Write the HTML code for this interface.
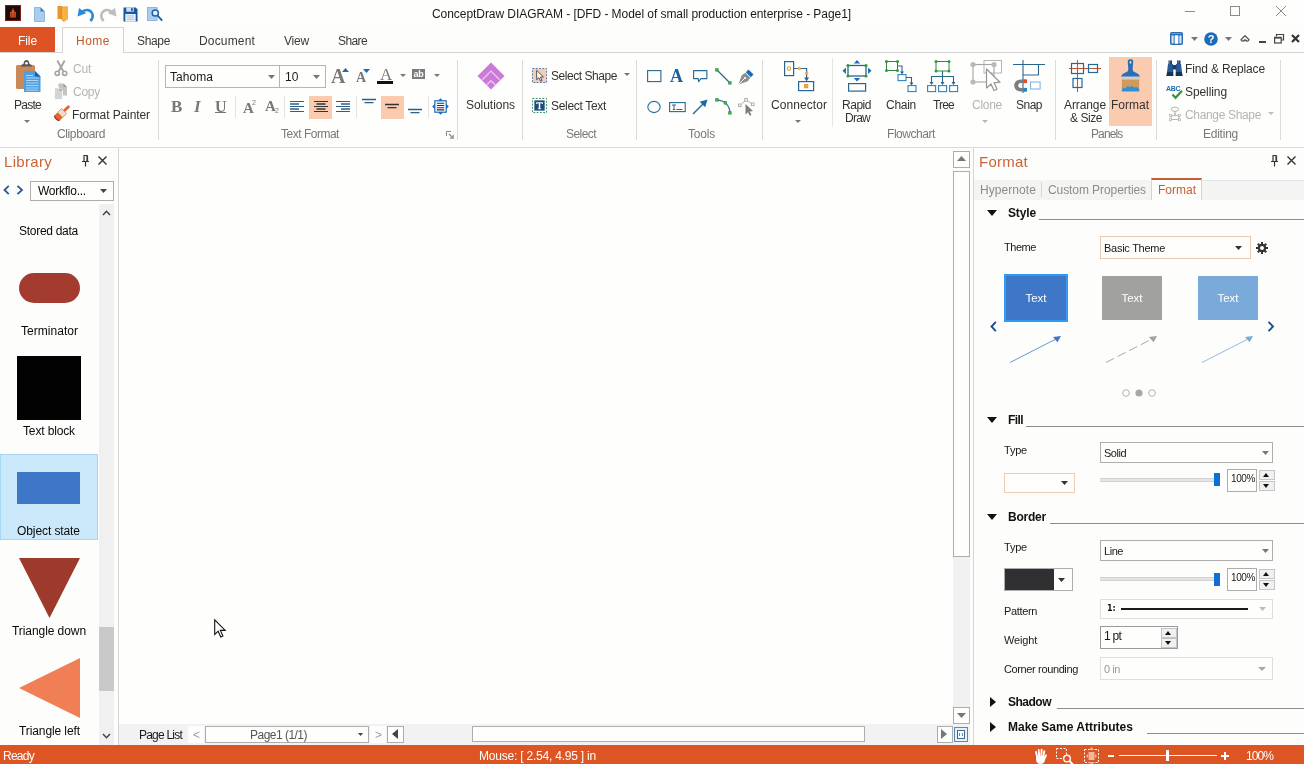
<!DOCTYPE html>
<html>
<head>
<meta charset="utf-8">
<title>ConceptDraw DIAGRAM</title>
<style>
html,body{margin:0;padding:0;}
body{width:1304px;height:764px;overflow:hidden;background:#fdfdfb;font-family:"Liberation Sans",sans-serif;font-size:12px;color:#222;position:relative;}
.a{position:absolute;white-space:nowrap;line-height:1;}
.t{position:absolute;white-space:nowrap;line-height:14px;height:14px;}
.g{color:#787878;}
.d{color:#b4b4b4;}
.f{font-size:11px;color:#1a1a1a;}
.sep{position:absolute;width:1px;background:#dcdcdc;}
svg{position:absolute;overflow:visible;}
</style>
</head>
<body>
<div id="root" style="position:absolute;left:0;top:0;width:1304px;height:764px;will-change:transform;">

<!-- ===== TITLE BAR ===== -->
<div class="a" id="titlebar" style="left:0;top:0;width:1304px;height:27px;background:#fefefc;"></div>
<div class="t" style="left:432px;top:7px;font-size:12px;color:#1a1a1a;letter-spacing:-0.06px;">ConceptDraw DIAGRAM - [DFD - Model of small production enterprise - Page1]</div>


<!-- quick access toolbar icons -->
<svg style="left:5px;top:5px" width="16" height="16" viewBox="0 0 16 16">
  <rect x="0.5" y="0.5" width="15" height="15" fill="#1b0b0a" stroke="#7a1c14"/>
  <path d="M5.200 12.500V6.800h1.600V5h0.700V3.200h1V5h0.700v1.800h1.600v5.700z" fill="#e2571f"/>
  <path d="M6.900 7.500v5M9.100 7.500v5" stroke="#5a1a10" stroke-width="0.600"/>
</svg>
<svg style="left:34px;top:7px" width="11" height="15" viewBox="0 0 11 15">
  <path d="M0.5 0.5h6l4 4v10h-10z" fill="#a9cdef" stroke="#8fb6dc"/>
  <path d="M6.5 0.5v4h4z" fill="#3f7fc0"/>
</svg>
<svg style="left:57px;top:5px" width="12" height="17" viewBox="0 0 12 17">
  <path d="M0.5 1.5h10.5v12.5h-10.5z" fill="#e8952a"/>
  <path d="M4.5 2.5l6.5-1v13l-4 2.3l-2.5-2.8z" fill="#f7b043"/>
  <path d="M0.5 1.5h4v12.5l2.5 2.8" fill="none" stroke="#d8881f" stroke-width="0.8"/>
</svg>
<svg style="left:77px;top:6px" width="18" height="16" viewBox="0 0 18 16">
  <path d="M4.5 6.5C8 2.8 13 3.2 15 7c1.3 2.6 0.6 5.6-1.6 8" fill="none" stroke="#2b8bd6" stroke-width="2.6"/>
  <path d="M0.5 10.5l1.5-8.5l7.2 5.2z" fill="#2b8bd6"/>
</svg>
<svg style="left:99px;top:6px" width="18" height="16" viewBox="0 0 18 16">
  <path d="M13.5 6.5C10 2.8 5 3.2 3 7c-1.3 2.6-0.6 5.6 1.6 8" fill="none" stroke="#bdbdbd" stroke-width="2.6"/>
  <path d="M17.5 10.5l-1.5-8.5l-7.2 5.2z" fill="#bdbdbd"/>
</svg>
<svg style="left:123px;top:7px" width="15" height="15" viewBox="0 0 16 16">
  <path d="M0.5 0.5h13l2 2v13h-15z" fill="#1859a8"/>
  <rect x="3.5" y="0.5" width="8" height="4.5" fill="#cfe2f5"/>
  <rect x="8.6" y="1.2" width="1.8" height="3" fill="#1859a8"/>
  <rect x="2.5" y="7.5" width="11" height="8" fill="#f4f8fc"/>
  <path d="M4 9.5h8M4 11.5h8M4 13.5h8" stroke="#9db9d8" stroke-width="0.9"/>
</svg>
<svg style="left:147px;top:6px" width="17" height="17" viewBox="0 0 17 17">
  <rect x="0.5" y="1.5" width="9.5" height="13" fill="#a9cdef" stroke="#8fb6dc"/>
  <circle cx="8.3" cy="7" r="3.1" fill="#e6f1fb" stroke="#1f5fa8" stroke-width="1.5"/>
  <path d="M10.6 9.6l4.6 5" stroke="#1f5fa8" stroke-width="1.9"/>
</svg>

<!-- window controls -->
<div class="a" style="left:1185px;top:11px;width:10px;height:1px;background:#8a8a8a;"></div>
<div class="a" style="left:1230px;top:6px;width:8px;height:8px;border:1px solid #8a8a8a;"></div>
<svg style="left:1276px;top:6px" width="10" height="10" viewBox="0 0 10 10"><path d="M0 0l10 10M10 0l-10 10" stroke="#8a8a8a" stroke-width="1"/></svg>

<!-- tab-row right icons -->
<svg style="left:1170px;top:32px" width="13" height="13" viewBox="0 0 13 13">
  <rect x="0.75" y="0.75" width="11.5" height="11.5" rx="1" fill="#d9e8f7" stroke="#2b6cb4" stroke-width="1.5"/>
  <path d="M0.75 2.6h11.5" stroke="#2b6cb4" stroke-width="1.6"/>
  <path d="M4.2 2.6v9.4M8.8 2.6v9.4" stroke="#2b6cb4" stroke-width="1.1"/>
  <rect x="4.8" y="3.6" width="3.4" height="8" fill="#fff"/>
</svg>
<svg style="left:1191px;top:37px" width="7" height="4" viewBox="0 0 7 4"><path d="M0 0h7l-3.5 4z" fill="#777"/></svg>
<svg style="left:1204px;top:32px" width="14" height="14" viewBox="0 0 14 14">
  <circle cx="7" cy="7" r="6.8" fill="#1b6cb8"/>
  <text x="7" y="11" font-family="Liberation Sans, sans-serif" font-size="11" font-weight="bold" fill="#fff" text-anchor="middle">?</text>
</svg>
<svg style="left:1225px;top:37px" width="7" height="4" viewBox="0 0 7 4"><path d="M0 0h7l-3.5 4z" fill="#777"/></svg>
<svg style="left:1240px;top:34px" width="10" height="9" viewBox="0 0 10 9"><path d="M1 5.8L5 1.6L9 5.8C8.2 7.8 6.4 7.4 5 5.8C3.6 7.4 1.8 7.8 1 5.800z" fill="none" stroke="#555" stroke-width="1.3" stroke-linejoin="round"/></svg>
<div class="a" style="left:1259px;top:41px;width:7px;height:2px;background:#444;"></div>
<svg style="left:1274px;top:34px" width="10" height="10" viewBox="0 0 10 10">
  <path d="M2.5 2.5v-2h7v5.500h-2" fill="none" stroke="#444" stroke-width="1.2"/>
  <rect x="0.6" y="3.4" width="6.6" height="5.6" fill="none" stroke="#444" stroke-width="1.2"/>
  <path d="M0.6 3.800h6.600" stroke="#444" stroke-width="1.600"/>
</svg>
<svg style="left:1291px;top:34px" width="9" height="9" viewBox="0 0 9 9"><path d="M1 1l7 7M8 1l-7 7" stroke="#333" stroke-width="2.2"/></svg>

<!-- ===== TAB ROW ===== -->
<div class="a" style="left:0;top:27px;width:55px;height:25px;background:#de5324;"></div>
<div class="t" style="left:18px;top:34px;color:#fff;letter-spacing:-0.09px;">File</div>
<div class="a" style="left:62px;top:27px;width:60px;height:25px;border:1px solid #d4d4d4;border-bottom:none;background:#fefefc;"></div>
<div class="t" style="left:76px;top:34px;color:#c5562c;letter-spacing:0.50px;">Home</div>
<div class="t" style="left:137px;top:34px;color:#3a3a3a;letter-spacing:-0.34px;">Shape</div>
<div class="t" style="left:199px;top:34px;color:#3a3a3a;letter-spacing:0.16px;">Document</div>
<div class="t" style="left:284px;top:34px;color:#3a3a3a;letter-spacing:-0.20px;">View</div>
<div class="t" style="left:338px;top:34px;color:#3a3a3a;letter-spacing:-0.61px;">Share</div>
<div class="a" style="left:0;top:52px;width:62px;height:1px;background:#d4d4d4;"></div>
<div class="a" style="left:123px;top:52px;width:1181px;height:1px;background:#d4d4d4;"></div>

<!-- ===== RIBBON ===== -->
<div class="a" id="ribbon" style="left:0;top:53px;width:1304px;height:94px;background:#fefefc;"></div>
<div class="a" style="left:0;top:147px;width:1304px;height:1px;background:#d9d9d9;"></div>


<!-- Clipboard group -->
<svg style="left:15px;top:59px" width="27" height="34" viewBox="0 0 27 34">
  <rect x="1" y="6" width="19" height="24" rx="1.5" fill="#c98a55"/>
  <path d="M6 7.5c0-1.500 1-2.500 2.500-2.500c0-2.700 1.300-4 3-4s3 1.300 3 4c1.500 0 2.500 1 2.500 2.500z" fill="#5b5560"/>
  <circle cx="11.500" cy="4.300" r="1.300" fill="#fefefc"/>
  <path d="M9 12h11l5.500 5.500V33H9z" fill="#4d9fe2"/>
  <path d="M20 12v5.500h5.500z" fill="#1c5fa5"/>
  <path d="M11 16.500h7M11 19h12.500M11 21.500h12.500M11 24h12.500M11 26.500h12.500M11 29h12.500M11 31.200h12.500" stroke="#b9dcf6" stroke-width="0.900"/>
</svg>
<div class="t" style="left:14px;top:98px;color:#333;letter-spacing:-0.74px;">Paste</div>
<svg style="left:24px;top:120px" width="6" height="3" viewBox="0 0 6 3"><path d="M0 0h6l-3 3z" fill="#777"/></svg>

<svg style="left:54px;top:60px" width="14" height="17" viewBox="0 0 14 17">
  <path d="M3.300 0.500L9.300 11.200M10.700 0.500L4.700 11.200" stroke="#a4a4a4" stroke-width="1.900" fill="none"/>
  <circle cx="3.300" cy="13.300" r="2.100" fill="none" stroke="#a4a4a4" stroke-width="1.600"/>
  <circle cx="10.700" cy="13.300" r="2.100" fill="none" stroke="#a4a4a4" stroke-width="1.600"/>
</svg>
<div class="t d" style="left:73px;top:62px;letter-spacing:-0.23px;">Cut</div>
<svg style="left:54px;top:83px" width="14" height="17" viewBox="0 0 14 17">
  <path d="M4.500 0.500h5l3.500 3.500v8.500h-8.500z" fill="#c4c4c4"/>
  <path d="M9.500 0.500v3.500h3.500z" fill="#9d9d9d"/>
  <path d="M0.500 5h5l3 3v8.500h-8z" fill="#d4d4d4" stroke="#fefefc" stroke-width="0.800"/>
  <path d="M5.500 5v3h3z" fill="#a8a8a8"/>
</svg>
<div class="t d" style="left:73px;top:85px;letter-spacing:-0.25px;">Copy</div>
<svg style="left:53px;top:105px" width="17" height="17" viewBox="0 0 17 17">
  <g transform="rotate(45 8.500 8.500)">
    <rect x="7.200" y="-2.500" width="2.800" height="8" rx="1.200" fill="#e8602a"/>
    <rect x="5" y="5" width="7.200" height="5.500" fill="#f5d9c0" stroke="#c58a60" stroke-width="0.700"/>
    <path d="M5 10.500h7.200v4.500c-2.400 1.200-4.800 1.200-7.200 0z" fill="#e8602a"/>
    <path d="M5 14.500c2.400 1.400 4.800 1.400 7.200 0v1.300c-2.400 1.300-4.800 1.300-7.200 0z" fill="#8a3a1a"/>
  </g>
</svg>
<div class="t" style="left:72px;top:108px;color:#333;letter-spacing:-0.10px;">Format Painter</div>
<div class="t g" style="left:57px;top:127px;letter-spacing:-0.38px;">Clipboard</div>
<div class="sep" style="left:158px;top:60px;height:80px;"></div>

<!-- Text Format group -->
<div class="a" style="left:165px;top:65px;width:113px;height:21px;border:1px solid #b5b5b5;background:#fefefd;"></div>
<div class="a" style="left:279px;top:65px;width:45px;height:21px;border:1px solid #b5b5b5;border-left:1px solid #b5b5b5;background:#fefefd;"></div>
<div class="t" style="left:170px;top:70px;color:#1a1a1a;letter-spacing:0.05px;">Tahoma</div>
<svg style="left:268px;top:75px" width="7" height="4" viewBox="0 0 7 4"><path d="M0 0h7l-3.500 4z" fill="#777"/></svg>
<div class="t" style="left:285px;top:70px;color:#1a1a1a;">10</div>
<svg style="left:313px;top:75px" width="7" height="4" viewBox="0 0 7 4"><path d="M0 0h7l-3.500 4z" fill="#777"/></svg>

<div class="a" style="left:331px;top:66px;font-family:'Liberation Serif',serif;font-weight:bold;font-size:20px;color:#787878;line-height:20px;">A</div>
<svg style="left:342px;top:68px" width="7" height="4" viewBox="0 0 7 4"><path d="M0 4h7l-3.500-4z" fill="#1b6cb8"/></svg>
<div class="a" style="left:356px;top:71px;font-family:'Liberation Serif',serif;font-weight:bold;font-size:14px;color:#787878;line-height:14px;">A</div>
<svg style="left:363px;top:69px" width="7" height="4" viewBox="0 0 7 4"><path d="M0 0h7l-3.500 4z" fill="#1b6cb8"/></svg>
<div class="a" style="left:380px;top:66px;font-family:'Liberation Serif',serif;font-size:17px;color:#787878;line-height:17px;">A</div>
<div class="a" style="left:377px;top:81px;width:16px;height:3px;background:#111;"></div>
<svg style="left:400px;top:74px" width="6" height="3" viewBox="0 0 6 3"><path d="M0 0h6l-3 3z" fill="#777"/></svg>
<div class="a" style="left:412px;top:69px;width:13px;height:10px;background:#7b7b7b;color:#fff;font-size:9px;line-height:10px;font-weight:bold;text-align:center;letter-spacing:-0.3px;">ab</div>
<svg style="left:434px;top:74px" width="6" height="3" viewBox="0 0 6 3"><path d="M0 0h6l-3 3z" fill="#777"/></svg>

<div class="a" style="left:171px;top:98px;font-family:'Liberation Serif',serif;font-weight:bold;font-size:17px;color:#787878;line-height:17px;">B</div>
<div class="a" style="left:194px;top:98px;font-family:'Liberation Serif',serif;font-style:italic;font-weight:bold;font-size:17px;color:#787878;line-height:17px;">I</div>
<div class="a" style="left:215px;top:98px;font-family:'Liberation Serif',serif;font-size:16px;font-weight:bold;color:#787878;line-height:17px;">U</div>
<div class="a" style="left:215px;top:112px;width:11px;height:1px;background:#787878;"></div>
<div class="sep" style="left:235px;top:96px;height:22px;background:#e4e4e4;"></div>
<div class="a" style="left:243px;top:101px;font-family:'Liberation Serif',serif;font-weight:bold;font-size:15px;color:#787878;line-height:15px;">A</div>
<div class="a" style="left:252px;top:99px;font-size:7px;color:#787878;line-height:7px;">2</div>
<div class="a" style="left:265px;top:99px;font-family:'Liberation Serif',serif;font-weight:bold;font-size:15px;color:#787878;line-height:15px;">A</div>
<div class="a" style="left:275px;top:107px;font-size:7px;color:#787878;line-height:7px;">2</div>
<div class="sep" style="left:284px;top:96px;height:22px;background:#e4e4e4;"></div>

<svg style="left:290px;top:100px" width="14" height="13" viewBox="0 0 14 13"><path d="M0 1.500h14M0 6.500h14M0 11.500h14" stroke="#2f5f88" stroke-width="1"/><path d="M0 4h9M0 9h9" stroke="#2f5f88" stroke-width="1.500"/></svg>
<div class="a" style="left:309px;top:96px;width:23px;height:23px;background:#fbcbb0;"></div>
<svg style="left:314px;top:100px" width="14" height="13" viewBox="0 0 14 13"><path d="M0 1.500h14M0 6.500h14M0 11.500h14" stroke="#333" stroke-width="1"/><path d="M2.500 4h9M2.500 9h9" stroke="#333" stroke-width="1.500"/></svg>
<svg style="left:336px;top:100px" width="14" height="13" viewBox="0 0 14 13"><path d="M0 1.500h14M0 6.500h14M0 11.500h14" stroke="#2f5f88" stroke-width="1"/><path d="M5 4h9M5 9h9" stroke="#2f5f88" stroke-width="1.500"/></svg>
<div class="sep" style="left:356px;top:96px;height:22px;background:#e4e4e4;"></div>
<svg style="left:362px;top:98px" width="14" height="8" viewBox="0 0 14 8"><path d="M0 1.500h14M2.500 4.700h9" stroke="#2f5f88" stroke-width="1.300"/></svg>
<div class="a" style="left:381px;top:96px;width:23px;height:23px;background:#fbcbb0;"></div>
<svg style="left:385px;top:103px" width="14" height="8" viewBox="0 0 14 8"><path d="M0 1.500h14M2.500 4.700h9" stroke="#333" stroke-width="1.300"/></svg>
<svg style="left:408px;top:108px" width="14" height="8" viewBox="0 0 14 8"><path d="M0 1.500h14M2.500 4.700h9" stroke="#2f5f88" stroke-width="1.300"/></svg>
<div class="sep" style="left:428px;top:96px;height:22px;background:#e4e4e4;"></div>
<svg style="left:432px;top:98px" width="17" height="17" viewBox="0 0 17 17">
  <path d="M8.500 0.200l3 3h-6zM8.500 16.800l3-3h-6zM0.200 8.500l3-3v6zM16.800 8.500l-3-3v6z" fill="#1b6cb8"/>
  <rect x="2.800" y="2.800" width="11.400" height="11.400" fill="#fff" stroke="#1b6cb8" stroke-width="1.200"/>
  <path d="M4.800 5.300h7.400M4.800 7.500h7.400M4.800 9.700h7.400M4.800 11.900h7.400" stroke="#1c2c48" stroke-width="1.100"/>
</svg>
<svg style="left:446px;top:131px" width="8" height="8" viewBox="0 0 8 8"><path d="M0.500 5V0.500H5" fill="none" stroke="#888" stroke-width="1"/><path d="M3 3l4 4M7.200 3.800v3.400H3.800" fill="none" stroke="#888" stroke-width="1.100"/></svg>
<div class="t g" style="left:281px;top:127px;letter-spacing:-0.49px;">Text Format</div>
<div class="sep" style="left:457px;top:60px;height:80px;"></div>

<!-- Solutions -->
<svg style="left:477px;top:62px" width="28" height="29" viewBox="0 0 28 29">
  <path d="M14 0.500L27.500 14L14 27.500L0.500 14z" fill="#ca7bd9"/>
  <path d="M5.300 17.800L14 9.100l8.700 8.700M9.600 23.100l4.400-4.400l4.400 4.400" fill="none" stroke="#f6c4f3" stroke-width="1.300"/>
</svg>
<div class="t" style="left:466px;top:98px;color:#333;letter-spacing:-0.04px;">Solutions</div>
<div class="sep" style="left:522px;top:60px;height:80px;"></div>

<!-- Select group -->
<svg style="left:532px;top:68px" width="15" height="15" viewBox="0 0 16 16">
  <rect x="0.500" y="0.500" width="15" height="15" fill="#f9ccb2" stroke="#3a78b5" stroke-width="1" stroke-dasharray="2 1.500"/>
  <path d="M5 2.500v10l2.400-2.200l1.700 3.700l1.600-0.700l-1.700-3.600l3.200-0.200z" fill="#fff" stroke="#444" stroke-width="1"/>
</svg>
<div class="t" style="left:551px;top:69px;color:#333;letter-spacing:-0.45px;">Select Shape</div>
<svg style="left:624px;top:73px" width="6" height="3" viewBox="0 0 6 3"><path d="M0 0h6l-3 3z" fill="#777"/></svg>
<svg style="left:532px;top:98px" width="15" height="15" viewBox="0 0 16 16">
  <rect x="0.500" y="0.500" width="15" height="15" fill="#fff" stroke="#2e8b57" stroke-width="1" stroke-dasharray="2 1.500"/>
  <rect x="2.500" y="2.500" width="11" height="11" fill="#1f4e79"/>
  <path d="M4.500 4.500h7v2h-1l-0.500-0.800h-1.200v5.300l1 0.500v0.600h-3.600v-0.600l1-0.500v-5.300h-1.200l-0.500 0.800h-1z" fill="#fff"/>
</svg>
<div class="t" style="left:551px;top:99px;color:#333;letter-spacing:-0.32px;">Select Text</div>
<div class="t g" style="left:566px;top:127px;letter-spacing:-0.56px;">Select</div>
<div class="sep" style="left:636px;top:60px;height:80px;"></div>

<!-- Tools group -->
<svg style="left:647px;top:69px" width="15" height="14" viewBox="0 0 15 14"><rect x="0.600" y="1.600" width="13.300" height="11" fill="none" stroke="#256b94" stroke-width="1.100"/></svg>
<div class="a" style="left:670px;top:67px;font-family:'Liberation Serif',serif;font-weight:bold;font-size:18px;color:#1f5f9a;line-height:18px;">A</div>
<svg style="left:693px;top:69px" width="15" height="14" viewBox="0 0 15 14"><path d="M0.600 1.600h13.300v8h-6l-2.300 3.200l-0.300-3.200h-4.700z" fill="none" stroke="#256b94" stroke-width="1.100" stroke-linejoin="round"/></svg>
<svg style="left:715px;top:68px" width="17" height="17" viewBox="0 0 17 17"><path d="M2 2l13 13" stroke="#256b94" stroke-width="1.200"/><rect x="0.700" y="0.700" width="2.400" height="2.400" fill="#5cb85c" stroke="#2e9a3a" stroke-width="0.900"/><rect x="13.700" y="13.700" width="2.400" height="2.400" fill="#5cb85c" stroke="#2e9a3a" stroke-width="0.900"/></svg>
<svg style="left:738px;top:68px" width="17" height="17" viewBox="0 0 17 17">
  <path d="M10.500 1.500l5 5l-2.700 2.700l-5-5z" fill="#1b6cb8"/>
  <path d="M7.300 4.800l5 5l-2.500 3.500l-9.300 3.200l3.200-9.300z" fill="#8e8e8e"/>
  <path d="M1 16l5.500-5.500" stroke="#fefefc" stroke-width="1"/>
  <circle cx="7" cy="10" r="1.100" fill="#fefefc"/>
</svg>
<svg style="left:647px;top:99px" width="15" height="15" viewBox="0 0 15 15"><ellipse cx="7" cy="8" rx="6.200" ry="5.600" fill="none" stroke="#256b94" stroke-width="1.100"/></svg>
<svg style="left:669px;top:101px" width="17" height="12" viewBox="0 0 17 12"><rect x="0.600" y="1.600" width="15.600" height="9" fill="none" stroke="#256b94" stroke-width="1.100"/><path d="M3 4h4M5 4v4.500M3.800 8.500h2.400M7.500 8.500h6" stroke="#256b94" stroke-width="1" fill="none"/></svg>
<svg style="left:692px;top:99px" width="16" height="16" viewBox="0 0 16 16"><path d="M1 15L12 4" stroke="#256b94" stroke-width="1.500"/><path d="M15.500 0.500l-2.300 7.800l-5.500-5.500z" fill="#1f6a9c"/></svg>
<svg style="left:715px;top:98px" width="17" height="17" viewBox="0 0 17 17"><path d="M2 2.200C9 2.200 14.800 7 15 15" fill="none" stroke="#256b94" stroke-width="1.200"/><rect x="0.700" y="0.700" width="2.400" height="2.400" fill="#5cb85c" stroke="#2e9a3a" stroke-width="0.900"/><rect x="9.200" y="3.700" width="2.400" height="2.400" fill="#5cb85c" stroke="#2e9a3a" stroke-width="0.900"/><rect x="13.700" y="13.700" width="2.400" height="2.400" fill="#5cb85c" stroke="#2e9a3a" stroke-width="0.900"/></svg>
<svg style="left:738px;top:98px" width="17" height="18" viewBox="0 0 17 18">
  <path d="M2 7.500l6-5.500l7 4.500" fill="none" stroke="#b0b0b0" stroke-width="1"/>
  <rect x="0.500" y="6" width="2.600" height="2.600" fill="#fff" stroke="#b0b0b0"/><rect x="6.700" y="0.500" width="2.600" height="2.600" fill="#fff" stroke="#b0b0b0"/><rect x="13.500" y="5" width="2.600" height="2.600" fill="#fff" stroke="#b0b0b0"/>
  <path d="M7.500 6v10.500l2.500-2.300l1.800 3.500l1.700-0.800l-1.800-3.500l3.300-0.300z" fill="#7d7d7d"/>
</svg>
<div class="t g" style="left:688px;top:127px;letter-spacing:-0.20px;">Tools</div>
<div class="sep" style="left:762px;top:60px;height:80px;"></div>

<!-- Connector / Flowchart group -->
<svg style="left:784px;top:60px" width="31" height="32" viewBox="0 0 31 32">
  <rect x="0.600" y="1.600" width="9" height="14" fill="#fff" stroke="#2a6590" stroke-width="1.200"/>
  <rect x="14.600" y="21.600" width="15" height="9" fill="#fff" stroke="#2a6590" stroke-width="1.200"/>
  <path d="M9.600 8.500h13v10" fill="none" stroke="#2a6590" stroke-width="1.200"/>
  <path d="M22.600 21.500l-2.400-4h4.800z" fill="#2a6590"/>
  <circle cx="5" cy="8.500" r="1.700" fill="#fff" stroke="#e89a2a" stroke-width="1.100"/>
  <circle cx="15.200" cy="8.500" r="1.300" fill="#f4b860" stroke="#e89a2a" stroke-width="0.800"/>
  <circle cx="22.600" cy="13" r="1.300" fill="#f4b860" stroke="#e89a2a" stroke-width="0.800"/>
  <rect x="20.300" y="24.300" width="3.600" height="3.600" fill="#f5a535" stroke="#e0891a" stroke-width="0.600"/>
</svg>
<div class="t" style="left:771px;top:98px;color:#333;letter-spacing:0.07px;">Connector</div>
<svg style="left:795px;top:120px" width="6" height="3" viewBox="0 0 6 3"><path d="M0 0h6l-3 3z" fill="#777"/></svg>
<div class="sep" style="left:832px;top:58px;height:69px;background:#e6e6e6;"></div>

<svg style="left:842px;top:59px" width="30" height="34" viewBox="0 0 30 34">
  <rect x="6" y="6.500" width="18" height="10.500" fill="#fff" stroke="#2a6590" stroke-width="1.300"/>
  <rect x="6.600" y="24.600" width="17" height="7.500" fill="#fff" stroke="#2a6590" stroke-width="1.200"/>
  <path d="M15 1l3.200 3.400h-6.400zM15 22.500l3.200-3.400h-6.400zM0.500 11.800l3.400-3.200v6.400zM29.500 11.800l-3.400-3.200v6.400z" fill="#1b6cb8"/>
  <circle cx="6" cy="6.500" r="1.600" fill="#2e9a3a"/><circle cx="24" cy="6.500" r="1.600" fill="#2e9a3a"/><circle cx="6" cy="17" r="1.600" fill="#2e9a3a"/><circle cx="24" cy="17" r="1.600" fill="#2e9a3a"/>
</svg>
<div class="t" style="left:842px;top:98px;color:#333;letter-spacing:-0.47px;">Rapid</div>
<div class="t" style="left:845px;top:111px;color:#333;letter-spacing:-0.75px;">Draw</div>

<svg style="left:884px;top:59px" width="33" height="33" viewBox="0 0 33 33">
  <rect x="2.500" y="2.500" width="11" height="9" fill="#fff" stroke="#2e8a3a" stroke-width="1"/>
  <circle cx="2.500" cy="2.500" r="1.500" fill="#2e9a3a"/><circle cx="13.500" cy="2.500" r="1.500" fill="#2e9a3a"/><circle cx="2.500" cy="11.500" r="1.500" fill="#2e9a3a"/><circle cx="13.500" cy="11.500" r="1.500" fill="#2e9a3a"/>
  <path d="M13.500 7h4.500v6" fill="none" stroke="#2a6590" stroke-width="1.100"/><path d="M18 15.500l-2-3h4z" fill="#2a6590"/>
  <rect x="14" y="15.600" width="8" height="6" fill="#fff" stroke="#2a84c4" stroke-width="1.100"/>
  <path d="M22 18.500h5.500v6" fill="none" stroke="#2a6590" stroke-width="1.100"/><path d="M27.500 26.500l-2-3h4z" fill="#2a6590"/>
  <rect x="24" y="26.600" width="8" height="6" fill="#fff" stroke="#2a84c4" stroke-width="1.100"/>
</svg>
<div class="t" style="left:886px;top:98px;color:#333;letter-spacing:-0.27px;">Chain</div>

<svg style="left:926px;top:59px" width="33" height="34" viewBox="0 0 33 34">
  <rect x="10" y="2.500" width="13" height="9.500" fill="#fff" stroke="#2e8a3a" stroke-width="1"/>
  <circle cx="10" cy="2.500" r="1.500" fill="#2e9a3a"/><circle cx="23" cy="2.500" r="1.500" fill="#2e9a3a"/><circle cx="10" cy="12" r="1.500" fill="#2e9a3a"/><circle cx="23" cy="12" r="1.500" fill="#2e9a3a"/>
  <path d="M16.500 12v11M5.500 23v-5.500h22v5.500" fill="none" stroke="#2a6590" stroke-width="1.100"/>
  <path d="M5.500 26l-2-3h4zM16.500 26l-2-3h4zM27.500 26l-2-3h4z" fill="#2a6590"/>
  <rect x="1.600" y="26.600" width="8" height="6" fill="#fff" stroke="#2a84c4" stroke-width="1.100"/>
  <rect x="12.600" y="26.600" width="8" height="6" fill="#fff" stroke="#2a84c4" stroke-width="1.100"/>
  <rect x="23.600" y="26.600" width="8" height="6" fill="#fff" stroke="#2a84c4" stroke-width="1.100"/>
</svg>
<div class="t" style="left:933px;top:98px;color:#333;letter-spacing:-0.81px;">Tree</div>

<svg style="left:970px;top:59px" width="33" height="33" viewBox="0 0 33 33">
  <rect x="14" y="1.500" width="17.500" height="12.500" fill="#fff" stroke="#b4b4b4" stroke-width="1"/>
  <rect x="3" y="5.500" width="21" height="17.500" fill="none" stroke="#a4a4a4" stroke-width="1.100"/>
  <circle cx="3" cy="5.500" r="2.600" fill="#b9b9b9"/><circle cx="24" cy="5.500" r="2.600" fill="#b9b9b9"/><circle cx="3" cy="23" r="2.600" fill="#b9b9b9"/>
  <path d="M16.500 10v19l4.500-4l3 6.500l3-1.400l-3-6.300l6-0.600z" fill="#fff" stroke="#959595" stroke-width="1.200" stroke-linejoin="round"/>
</svg>
<div class="t d" style="left:972px;top:98px;letter-spacing:-0.27px;">Clone</div>
<svg style="left:982px;top:120px" width="6" height="3" viewBox="0 0 6 3"><path d="M0 0h6l-3 3z" fill="#b5b5b5"/></svg>

<svg style="left:1013px;top:59px" width="33" height="34" viewBox="0 0 33 34">
  <path d="M0 5.500h32M10 1v33M10 16h15.500v-10.500" fill="none" stroke="#2a6590" stroke-width="1.100"/>
  <rect x="17.600" y="23" width="9.500" height="7" fill="#fff" stroke="#6fb0dc" stroke-width="1"/>
  <path d="M13.500 20.500h-5.500c-4.300 0-6.800 2.800-6.800 6s2.500 6 6.800 6h5.500v-3.600h-5.500c-1.800 0-2.800-1.100-2.800-2.400s1-2.400 2.800-2.400h5.500z" fill="#7d7d82"/>
  <rect x="10.500" y="20.500" width="3.500" height="3.600" fill="#e24a2a"/>
  <rect x="10.500" y="28.900" width="3.500" height="3.600" fill="#1f86c8"/>
</svg>
<div class="t" style="left:1016px;top:98px;color:#333;letter-spacing:-0.51px;">Snap</div>
<div class="t g" style="left:887px;top:127px;letter-spacing:-0.45px;">Flowchart</div>
<div class="sep" style="left:1055px;top:60px;height:80px;"></div>

<!-- Panels group -->
<svg style="left:1069px;top:60px" width="33" height="34" viewBox="0 0 33 34">
  <path d="M0 8.500h32M8.500 0v32" stroke="#c8553a" stroke-width="1.100"/>
  <rect x="2.500" y="3.500" width="12" height="10" fill="none" stroke="#1f6a9c" stroke-width="1.200"/>
  <rect x="19.500" y="4.500" width="9" height="8" fill="none" stroke="#1f6a9c" stroke-width="1.200"/>
  <rect x="4" y="18.500" width="9" height="9" fill="none" stroke="#1f6a9c" stroke-width="1.200"/>
</svg>
<div class="t" style="left:1064px;top:98px;color:#333;letter-spacing:-0.10px;">Arrange</div>
<div class="t" style="left:1070px;top:111px;color:#333;letter-spacing:-0.45px;">&amp; Size</div>
<div class="a" style="left:1109px;top:57px;width:43px;height:69px;background:#fbcbb0;"></div>
<svg style="left:1120px;top:59px" width="21" height="34" viewBox="0 0 21 34">
  <path d="M7.800 2c0-2.300 5.400-2.300 5.400 0c0.200 3.500-0.900 6.500-0.300 9.500c0.500 2 5.600 2.500 6.600 5v2h-18v-2c1-2.500 6.100-3 6.600-5c0.600-3-0.500-6-0.300-9.500z" fill="#2a6fb5"/><ellipse cx="10.500" cy="3.300" rx="0.900" ry="1.500" fill="#fbcbb0"/>
  <rect x="1.500" y="17.500" width="18" height="3" fill="#d4cec6"/>
  <path d="M1.800 20.500h17.400v11h-17.400z" fill="#cf9a5c"/>
  <path d="M1.800 31c1-2 2.500-2.800 4-1.500c1-2.500 2.500-3 4-1c1.500-2.300 3-2 4.500 0.500c1.500-1.800 3.500-1.500 4.900 1.500v2h-17.400z" fill="#2f8fd8"/>
</svg>
<div class="t" style="left:1111px;top:98px;color:#333;letter-spacing:-0.00px;">Format</div>
<div class="t g" style="left:1091px;top:127px;letter-spacing:-0.90px;">Panels</div>
<div class="sep" style="left:1156px;top:60px;height:80px;"></div>

<!-- Editing group -->
<svg style="left:1166px;top:60px" width="17" height="17" viewBox="0 0 17 17">
  <path d="M2.500 0.500h3.500v4h-3.500zM11 0.500h3.500v4h-3.500z" fill="#1f3f68"/>
  <path d="M2 4h5l0.500 12h-7zM10 4h5l1.500 12h-7z" fill="#2a5a94"/>
  <rect x="6.500" y="5" width="4" height="4.500" fill="#1f3f68"/>
  <path d="M1.200 12h5.800v4h-6.500zM10 12h5.800l0.700 4h-6.500z" fill="#16325a"/>
  <path d="M3.200 1h1v2.500h-1zM11.800 1h1v2.500h-1z" fill="#5a8ac4"/>
</svg>
<div class="t" style="left:1185px;top:62px;color:#333;letter-spacing:-0.15px;">Find &amp; Replace</div>
<svg style="left:1166px;top:84px" width="17" height="16" viewBox="0 0 17 16">
  <text x="0" y="6.500" font-family="Liberation Sans, sans-serif" font-size="7" font-weight="bold" fill="#1b6cb8" letter-spacing="-0.300">ABC</text>
  <path d="M6.500 10.500l3 3.200l6.500-7" fill="none" stroke="#2e9a3a" stroke-width="2.300"/>
</svg>
<div class="t" style="left:1185px;top:85px;color:#333;letter-spacing:-0.09px;">Spelling</div>
<svg style="left:1169px;top:106px" width="12" height="16" viewBox="0 0 14 17">
  <ellipse cx="7" cy="3" rx="4.500" ry="2.500" fill="none" stroke="#ababab" stroke-width="1"/>
  <path d="M7 5.500v3" stroke="#ababab" stroke-width="1"/><path d="M7 10l-1.800-2h3.600z" fill="#ababab"/>
  <rect x="2.500" y="10.500" width="9" height="4.500" fill="none" stroke="#ababab" stroke-width="1"/>
  <rect x="0.500" y="9" width="2.500" height="2.500" fill="#fff" stroke="#ababab" stroke-width="0.800"/><rect x="11" y="9" width="2.500" height="2.500" fill="#fff" stroke="#ababab" stroke-width="0.800"/>
  <rect x="0.500" y="14" width="2.500" height="2.500" fill="#fff" stroke="#ababab" stroke-width="0.800"/><rect x="11" y="14" width="2.500" height="2.500" fill="#fff" stroke="#ababab" stroke-width="0.800"/>
</svg>
<div class="t d" style="left:1185px;top:108px;letter-spacing:-0.34px;">Change Shape</div>
<svg style="left:1268px;top:112px" width="6" height="3" viewBox="0 0 6 3"><path d="M0 0h6l-3 3z" fill="#c0c0c0"/></svg>
<div class="t g" style="left:1203px;top:127px;letter-spacing:-0.24px;">Editing</div>
<div class="sep" style="left:1280px;top:60px;height:80px;"></div>
<!--RIB-->
<!-- ===== LIBRARY PANEL ===== -->
<div class="a" id="library" style="left:0;top:148px;width:118px;height:597px;background:#fdfdfb;"></div>
<div class="a" style="left:118px;top:148px;width:1px;height:597px;background:#d6d6d6;"></div>
<div class="t" style="left:4px;top:152px;font-size:15px;line-height:20px;height:20px;color:#c9643a;letter-spacing:0.31px;">Library</div>
<svg style="left:81px;top:155px" width="9" height="12" viewBox="0 0 9 12"><path d="M2.500 0.500h4M3 0.500v5.500M6 0.500v5.500" stroke="#333" stroke-width="1.200" fill="none"/><path d="M6.600 0.500v5.500" stroke="#333" stroke-width="1"/><path d="M1 6.500h7M4.500 6.500v5" stroke="#333" stroke-width="1.200"/></svg>
<svg style="left:98px;top:156px" width="9" height="9" viewBox="0 0 9 9"><path d="M0.500 0.500l8 8M8.500 0.500l-8 8" stroke="#333" stroke-width="1.400"/></svg>
<svg style="left:3px;top:185px" width="7" height="10" viewBox="0 0 7 10"><path d="M5.800 0.800L1.500 5l4.300 4.200" fill="none" stroke="#2a5a8c" stroke-width="1.800"/></svg>
<svg style="left:16px;top:185px" width="8" height="10" viewBox="0 0 8 10"><path d="M1.500 0.800L6 5l-4.500 4.200" fill="none" stroke="#2a5a8c" stroke-width="1.800"/></svg>
<div class="a" style="left:30px;top:181px;width:82px;height:18px;border:1px solid #adadad;background:#fefefd;"></div>
<div class="t" style="left:38px;top:184px;color:#0a0a0a;letter-spacing:-0.25px;">Workflo...</div>
<svg style="left:100px;top:189px" width="7" height="4" viewBox="0 0 7 4"><path d="M0 0h7l-3.500 4z" fill="#444"/></svg>
<div class="a" style="left:99px;top:204px;width:15px;height:541px;background:#f0f0f0;"></div>
<svg style="left:102px;top:210px" width="9" height="6" viewBox="0 0 9 6"><path d="M1 5l3.500-3.700L8 5" fill="none" stroke="#444" stroke-width="1.500"/></svg>
<div class="a" style="left:99px;top:627px;width:15px;height:64px;background:#c9c9c9;"></div>
<svg style="left:102px;top:733px" width="9" height="6" viewBox="0 0 9 6"><path d="M1 1l3.500 3.700L8 1" fill="none" stroke="#444" stroke-width="1.500"/></svg>

<div class="t" style="left:19px;top:224px;color:#0a0a0a;letter-spacing:-0.28px;">Stored data</div>
<div class="a" style="left:19px;top:273px;width:61px;height:30px;border-radius:15px;background:#a33c2e;"></div>
<div class="t" style="left:21px;top:324px;color:#0a0a0a;letter-spacing:0.03px;">Terminator</div>
<div class="a" style="left:17px;top:356px;width:64px;height:64px;background:#020203;"></div>
<div class="t" style="left:23px;top:424px;color:#0a0a0a;letter-spacing:-0.14px;">Text block</div>
<div class="a" style="left:0;top:454px;width:96px;height:84px;background:#cbe8fb;border:1px solid #a5d7f7;"></div>
<div class="a" style="left:17px;top:472px;width:63px;height:32px;background:#3f77c8;"></div>
<div class="t" style="left:17px;top:524px;color:#0a0a0a;letter-spacing:-0.09px;">Object state</div>
<svg style="left:19px;top:558px" width="61" height="60" viewBox="0 0 61 60"><path d="M0 0h61L30.500 60z" fill="#9e3a2c"/></svg>
<div class="t" style="left:12px;top:624px;color:#0a0a0a;letter-spacing:-0.07px;">Triangle down</div>
<svg style="left:19px;top:658px" width="61" height="60" viewBox="0 0 61 60"><path d="M61 0v60L0 30z" fill="#f07f55"/></svg>
<div class="t" style="left:19px;top:724px;color:#0a0a0a;letter-spacing:-0.10px;">Triangle left</div>

<!-- ===== CANVAS ===== -->
<div class="a" id="canvas" style="left:119px;top:148px;width:834px;height:576px;background:#fefefc;"></div>
<svg style="left:214px;top:619px" width="12" height="19" viewBox="0 0 12 19"><path d="M0.700 0.800v14.700l3.500-3.300l2.500 5.800l2.200-1l-2.500-5.600h4.800z" fill="#fff" stroke="#111" stroke-width="1.100" stroke-linejoin="miter"/></svg>

<!-- vertical scrollbar -->
<div class="a" style="left:953px;top:148px;width:17px;height:576px;background:#f1f1f1;"></div>
<div class="a" style="left:953px;top:148px;width:17px;height:24px;background:#fdfdfb;"></div>
<div class="a" style="left:953px;top:151px;width:15px;height:15px;border:1px solid #adadad;background:#fefefd;"></div>
<svg style="left:957px;top:156px" width="9" height="5" viewBox="0 0 9 5"><path d="M0 5h9l-4.500-5z" fill="#777"/></svg>
<div class="a" style="left:953px;top:171px;width:15px;height:384px;border:1px solid #adadad;border-bottom:1px solid #adadad;background:#fefefd;"></div>
<div class="a" style="left:953px;top:707px;width:15px;height:15px;border:1px solid #adadad;background:#fefefd;"></div>
<svg style="left:957px;top:713px" width="9" height="5" viewBox="0 0 9 5"><path d="M0 0h9l-4.500 5z" fill="#777"/></svg>

<!-- bottom strip -->
<div class="a" style="left:119px;top:724px;width:853px;height:21px;background:#f2f2f2;"></div>
<div class="t" style="left:139px;top:728px;color:#1a1a1a;letter-spacing:-0.78px;">Page List</div>
<div class="a" style="left:188px;top:726px;width:16px;height:17px;background:#fdfdfd;"></div>
<div class="t" style="left:193px;top:728px;color:#a0a0a0;">&lt;</div>
<div class="a" style="left:205px;top:726px;width:162px;height:15px;border:1px solid #adadad;background:#fefefd;"></div>
<div class="t" style="left:250px;top:728px;color:#555;letter-spacing:-0.52px;">Page1 (1/1)</div>
<svg style="left:358px;top:733px" width="5" height="3" viewBox="0 0 5 3"><path d="M0 0h5l-2.500 3z" fill="#444"/></svg>
<div class="a" style="left:370px;top:726px;width:16px;height:17px;background:#fdfdfd;"></div>
<div class="t" style="left:375px;top:728px;color:#a0a0a0;">&gt;</div>
<div class="a" style="left:387px;top:726px;width:15px;height:15px;border:1px solid #adadad;background:#fefefd;"></div>
<svg style="left:392px;top:729px" width="6" height="10" viewBox="0 0 6 10"><path d="M6 0v10l-6-5z" fill="#444"/></svg>
<div class="a" style="left:472px;top:726px;width:391px;height:14px;border:1px solid #adadad;background:#fefefd;"></div>
<div class="a" style="left:937px;top:726px;width:14px;height:15px;border:1px solid #adadad;background:#fefefd;"></div>
<svg style="left:941px;top:729px" width="6" height="10" viewBox="0 0 6 10"><path d="M0 0v10l6-5z" fill="#777"/></svg>
<svg style="left:954px;top:727px" width="14" height="15" viewBox="0 0 14 15"><rect x="0.500" y="0.500" width="13" height="14" fill="#e8f1f8" stroke="#5a8ab0"/><rect x="3.500" y="3.500" width="7" height="8" fill="#fff" stroke="#3a6a94"/><path d="M5.500 6v3M8.500 6v3" stroke="#3a6a94" stroke-width="0.800"/></svg>

<!-- ===== FORMAT PANEL ===== -->
<div class="a" style="left:970px;top:148px;width:334px;height:597px;background:#fdfdfb;"></div>
<div class="a" style="left:973px;top:148px;width:1px;height:597px;background:#d6d6d6;"></div>
<div class="t" style="left:979px;top:152px;font-size:15px;line-height:20px;height:20px;color:#c9643a;letter-spacing:0.25px;">Format</div>
<svg style="left:1270px;top:155px" width="9" height="12" viewBox="0 0 9 12"><path d="M2.500 0.500h4M3 0.500v5.500M6 0.500v5.500" stroke="#333" stroke-width="1.200" fill="none"/><path d="M6.600 0.500v5.500" stroke="#333" stroke-width="1"/><path d="M1 6.500h7M4.500 6.500v5" stroke="#333" stroke-width="1.200"/></svg>
<svg style="left:1287px;top:156px" width="9" height="9" viewBox="0 0 9 9"><path d="M0.500 0.500l8 8M8.500 0.500l-8 8" stroke="#333" stroke-width="1.400"/></svg>

<div class="a" style="left:974px;top:180px;width:330px;height:20px;background:#f4f4f3;"></div>
<div class="a" style="left:1201px;top:180px;width:103px;height:1px;background:#dfe6ee;"></div>
<div class="t" style="left:980px;top:183px;color:#8c8c8c;letter-spacing:0.07px;">Hypernote</div>
<div class="a" style="left:1041px;top:182px;width:1px;height:15px;background:#d8d8d8;"></div>
<div class="t" style="left:1048px;top:183px;color:#8c8c8c;letter-spacing:-0.08px;">Custom Properties</div>
<div class="a" style="left:1151px;top:178px;width:49px;height:20px;background:#fdfdfb;border-left:1px solid #d4d4d4;border-right:1px solid #d4d4d4;border-top:2px solid #c0603a;box-sizing:content-box;"></div>
<div class="t" style="left:1158px;top:183px;color:#c0603a;letter-spacing:-0.00px;">Format</div>

<!-- Style section -->
<svg style="left:987px;top:210px" width="10" height="6" viewBox="0 0 10 6"><path d="M0 0h10l-5 6z" fill="#111"/></svg>
<div class="t" style="left:1008px;top:206px;font-weight:bold;color:#111;letter-spacing:-0.14px;">Style</div>
<div class="a" style="left:1039px;top:219px;width:265px;height:1px;background:#8c8c8c;"></div>
<div class="t f" style="left:1004px;top:240px;letter-spacing:-0.45px;">Theme</div>
<div class="a" style="left:1100px;top:236px;width:149px;height:21px;border:1px solid #ecc9ae;background:#fefefc;"></div>
<div class="t f" style="left:1104px;top:241px;letter-spacing:-0.27px;">Basic Theme</div>
<svg style="left:1235px;top:246px" width="7" height="4" viewBox="0 0 7 4"><path d="M0 0h7l-3.500 4z" fill="#333"/></svg>
<svg style="left:1256px;top:242px" width="12" height="12" viewBox="0 0 12 12">
  <g fill="#333"><rect x="5" y="0" width="2" height="12"/><rect x="0" y="5" width="12" height="2"/><rect x="5" y="0" width="2" height="12" transform="rotate(45 6 6)"/><rect x="5" y="0" width="2" height="12" transform="rotate(-45 6 6)"/><circle cx="6" cy="6" r="4.200"/></g><circle cx="6" cy="6" r="2" fill="#fdfdfb"/>
</svg>

<div class="a" style="left:1004px;top:274px;width:60px;height:44px;background:#3f77c8;border:2px solid #2f9bf2;"></div>
<div class="t f" style="left:1004px;top:291px;width:64px;text-align:center;color:#fff;font-size:11.5px;">Text</div>
<div class="a" style="left:1102px;top:276px;width:60px;height:44px;background:#a1a19d;"></div>
<div class="t f" style="left:1102px;top:291px;width:60px;text-align:center;color:#fff;font-size:11.5px;">Text</div>
<div class="a" style="left:1198px;top:276px;width:60px;height:44px;background:#7aaad9;"></div>
<div class="t f" style="left:1198px;top:291px;width:60px;text-align:center;color:#fff;font-size:11.5px;">Text</div>
<svg style="left:990px;top:321px" width="7" height="11" viewBox="0 0 7 11"><path d="M5.800 0.800L1.500 5.500l4.300 4.700" fill="none" stroke="#1f4e8c" stroke-width="1.900"/></svg>
<svg style="left:1267px;top:321px" width="8" height="11" viewBox="0 0 8 11"><path d="M1.500 0.800L6 5.500l-4.500 4.700" fill="none" stroke="#1f4e8c" stroke-width="1.900"/></svg>
<svg style="left:1005px;top:333px" width="260" height="34" viewBox="0 0 260 34">
  <path d="M5 29.500L50 6.500" stroke="#5a8ac8" stroke-width="0.900"/><path d="M56 3l-3.500 6.300l-4.500-5.300z" fill="#3f77c8"/>
  <path d="M101 29.500L146 6.500" stroke="#a0a0a0" stroke-width="0.900" stroke-dasharray="9 4"/><path d="M152 3l-3.500 6.300l-4.500-5.300z" fill="#a1a19d"/>
  <path d="M197 29.500L242 6.500" stroke="#8ab4dc" stroke-width="0.900"/><path d="M248 3l-3.500 6.300l-4.500-5.300z" fill="#7aaad9"/>
</svg>
<svg style="left:1120px;top:388px" width="40" height="10" viewBox="0 0 40 10">
  <circle cx="6" cy="5" r="3.300" fill="#fff" stroke="#a8a8a8" stroke-width="0.900"/><circle cx="19" cy="5" r="3.600" fill="#a8a8a8"/><circle cx="32" cy="5" r="3.300" fill="#fff" stroke="#a8a8a8" stroke-width="0.900"/>
</svg>

<!-- Fill section -->
<svg style="left:987px;top:417px" width="10" height="6" viewBox="0 0 10 6"><path d="M0 0h10l-5 6z" fill="#111"/></svg>
<div class="t" style="left:1008px;top:413px;font-weight:bold;color:#111;letter-spacing:-0.59px;">Fill</div>
<div class="a" style="left:1026px;top:426px;width:278px;height:1px;background:#8c8c8c;"></div>
<div class="t f" style="left:1004px;top:443px;letter-spacing:-0.21px;">Type</div>
<div class="a" style="left:1100px;top:442px;width:171px;height:19px;border:1px solid #adadad;background:#fefefc;"></div>
<div class="t f" style="left:1104px;top:446px;letter-spacing:-0.49px;">Solid</div>
<svg style="left:1262px;top:451px" width="7" height="4" viewBox="0 0 7 4"><path d="M0 0h7l-3.500 4z" fill="#777"/></svg>
<div class="a" style="left:1004px;top:473px;width:69px;height:18px;border:1px solid #f0cab2;background:#fefefd;"></div>
<svg style="left:1061px;top:481px" width="7" height="4" viewBox="0 0 7 4"><path d="M0 0h7l-3.500 4z" fill="#333"/></svg>
<div class="a" style="left:1100px;top:478px;width:118px;height:2px;background:#e4e4e4;border:1px solid #d2d2d2;border-left:none;border-right:none;"></div>
<div class="a" style="left:1214px;top:473px;width:6px;height:13px;background:#0f6fd4;"></div>
<div class="a" style="left:1227px;top:469px;width:28px;height:21px;border:1px solid #adadad;background:#fefefc;"></div>
<div class="t f" style="left:1231px;top:472px;font-size:10px;letter-spacing:-0.39px;">100%</div>
<div class="a" style="left:1259px;top:470px;width:14px;height:8px;border:1px solid #c4c4c4;background:#f0f0f0;"></div>
<svg style="left:1263px;top:473px" width="6" height="4" viewBox="0 0 6 4"><path d="M0 4h6l-3-4z" fill="#111"/></svg>
<div class="a" style="left:1259px;top:481px;width:14px;height:8px;border:1px solid #c4c4c4;background:#f0f0f0;"></div>
<svg style="left:1263px;top:484px" width="6" height="4" viewBox="0 0 6 4"><path d="M0 0h6l-3 4z" fill="#111"/></svg>

<!-- Border section -->
<svg style="left:987px;top:514px" width="10" height="6" viewBox="0 0 10 6"><path d="M0 0h10l-5 6z" fill="#111"/></svg>
<div class="t" style="left:1008px;top:510px;font-weight:bold;color:#111;letter-spacing:-0.22px;">Border</div>
<div class="a" style="left:1050px;top:523px;width:254px;height:1px;background:#8c8c8c;"></div>
<div class="t f" style="left:1004px;top:540px;letter-spacing:-0.21px;">Type</div>
<div class="a" style="left:1100px;top:540px;width:171px;height:19px;border:1px solid #adadad;background:#fefefc;"></div>
<div class="t f" style="left:1104px;top:544px;letter-spacing:-0.45px;">Line</div>
<svg style="left:1262px;top:549px" width="7" height="4" viewBox="0 0 7 4"><path d="M0 0h7l-3.500 4z" fill="#777"/></svg>
<div class="a" style="left:1004px;top:568px;width:67px;height:21px;border:1px solid #adadad;background:#fefefd;"></div>
<div class="a" style="left:1005px;top:569px;width:49px;height:21px;background:#303032;"></div>
<svg style="left:1058px;top:578px" width="7" height="4" viewBox="0 0 7 4"><path d="M0 0h7l-3.500 4z" fill="#333"/></svg>
<div class="a" style="left:1100px;top:577px;width:118px;height:2px;background:#e4e4e4;border:1px solid #d2d2d2;border-left:none;border-right:none;"></div>
<div class="a" style="left:1214px;top:573px;width:6px;height:13px;background:#0f6fd4;"></div>
<div class="a" style="left:1227px;top:568px;width:28px;height:21px;border:1px solid #adadad;background:#fefefc;"></div>
<div class="t f" style="left:1231px;top:571px;font-size:10px;letter-spacing:-0.39px;">100%</div>
<div class="a" style="left:1259px;top:569px;width:14px;height:8px;border:1px solid #c4c4c4;background:#f0f0f0;"></div>
<svg style="left:1263px;top:572px" width="6" height="4" viewBox="0 0 6 4"><path d="M0 4h6l-3-4z" fill="#111"/></svg>
<div class="a" style="left:1259px;top:580px;width:14px;height:8px;border:1px solid #c4c4c4;background:#f0f0f0;"></div>
<svg style="left:1263px;top:583px" width="6" height="4" viewBox="0 0 6 4"><path d="M0 0h6l-3 4z" fill="#111"/></svg>

<div class="t f" style="left:1004px;top:604px;letter-spacing:-0.35px;">Pattern</div>
<div class="a" style="left:1100px;top:599px;width:171px;height:18px;border:1px solid #dedede;background:#fefefc;"></div>
<div class="a" style="left:1107px;top:604px;font-size:8px;line-height:9px;font-weight:bold;color:#111;font-family:'DejaVu Sans',sans-serif;">1:</div>
<div class="a" style="left:1121px;top:608px;width:127px;height:2px;background:#1a1a1a;"></div>
<svg style="left:1259px;top:607px" width="7" height="4" viewBox="0 0 7 4"><path d="M0 0h7l-3.500 4z" fill="#bdbdbd"/></svg>
<div class="t f" style="left:1004px;top:633px;letter-spacing:-0.17px;">Weight</div>
<div class="a" style="left:1100px;top:626px;width:76px;height:21px;border:1px solid #9a9a9a;background:#fefefc;"></div>
<div class="t f" style="left:1104px;top:629px;font-size:12px;letter-spacing:-0.75px;">1 pt</div>
<div class="a" style="left:1161px;top:628px;width:14px;height:8px;border:1px solid #c4c4c4;background:#f0f0f0;"></div>
<svg style="left:1165px;top:631px" width="6" height="4" viewBox="0 0 6 4"><path d="M0 4h6l-3-4z" fill="#111"/></svg>
<div class="a" style="left:1161px;top:638px;width:14px;height:8px;border:1px solid #c4c4c4;background:#f0f0f0;"></div>
<svg style="left:1165px;top:641px" width="6" height="4" viewBox="0 0 6 4"><path d="M0 0h6l-3 4z" fill="#111"/></svg>
<div class="t f" style="left:1004px;top:662px;letter-spacing:-0.37px;">Corner rounding</div>
<div class="a" style="left:1100px;top:657px;width:171px;height:21px;border:1px solid #dedede;background:#fefefc;"></div>
<div class="t f" style="left:1104px;top:662px;color:#9a9a9a;letter-spacing:-0.44px;">0 in</div>
<svg style="left:1258px;top:667px" width="8" height="4" viewBox="0 0 8 4"><path d="M0 0h8l-4 4z" fill="#a8a8a8"/></svg>

<svg style="left:990px;top:697px" width="6" height="10" viewBox="0 0 6 10"><path d="M0 0v10l6-5z" fill="#111"/></svg>
<div class="t" style="left:1008px;top:695px;font-weight:bold;color:#111;letter-spacing:-0.50px;">Shadow</div>
<div class="a" style="left:1057px;top:708px;width:247px;height:1px;background:#8c8c8c;"></div>
<svg style="left:990px;top:722px" width="6" height="10" viewBox="0 0 6 10"><path d="M0 0v10l6-5z" fill="#111"/></svg>
<div class="t" style="left:1008px;top:720px;font-weight:bold;color:#111;letter-spacing:0.00px;">Make Same Attributes</div>
<div class="a" style="left:1147px;top:733px;width:157px;height:1px;background:#8c8c8c;"></div>


<!-- ===== STATUS BAR ===== -->
<div class="a" id="status" style="left:0;top:745px;width:1304px;height:19px;background:#dd5523;"></div>
<div class="t" style="left:3px;top:749px;color:#fff;letter-spacing:-0.74px;">Ready</div>
<div class="t" style="left:479px;top:749px;color:#fff;letter-spacing:-0.21px;">Mouse: [ 2.54, 4.95 ] in</div>
<div class="t" style="left:1246px;top:749px;color:#fff;letter-spacing:-0.90px;">100%</div>
<svg style="left:1033px;top:748px" width="14" height="16" viewBox="0 0 14 16"><g stroke="#fff" stroke-width="1.900" stroke-linecap="round" fill="none"><path d="M4.200 9L3 4"/><path d="M6.200 8L5.700 2"/><path d="M8.300 8L8.600 1.800"/><path d="M10.300 8.500L11.300 3.200"/><path d="M11.300 11L13 7.300"/></g><path d="M3.200 8h8.300l0.600 3.500c0 2.700-2 4.500-4.600 4.500s-4.500-1.800-4.500-4.500z" fill="#fff"/></svg>
<svg style="left:1056px;top:748px" width="18" height="17" viewBox="0 0 18 17"><rect x="0.500" y="0.500" width="10" height="10" fill="none" stroke="#fff" stroke-width="1" stroke-dasharray="2 1.500"/><circle cx="11" cy="10.500" r="3.300" fill="#dd5523" stroke="#fff" stroke-width="1.400"/><path d="M13.500 13l3.500 3.500" stroke="#fff" stroke-width="1.800"/></svg>
<svg style="left:1084px;top:747px" width="15" height="18" viewBox="0 0 15 18"><rect x="0.500" y="2.500" width="14" height="13" fill="none" stroke="#fff" stroke-width="1" stroke-dasharray="2 1.500"/><rect x="4.500" y="5" width="6" height="8" fill="#f3b59c"/><path d="M7.500 0l2.500 3h-5zM7.500 18l2.500-3h-5zM2 9l2-2v4zM13 9l-2-2v4z" fill="#f3b59c"/></svg>
<div class="a" style="left:1108px;top:755px;width:6px;height:2px;background:#fff;"></div>
<div class="a" style="left:1119px;top:755px;width:98px;height:1px;background:#fff;"></div>
<div class="a" style="left:1166px;top:750px;width:3px;height:11px;background:#fff;"></div>
<div class="a" style="left:1221px;top:755px;width:8px;height:2px;background:#fff;"></div>
<div class="a" style="left:1224px;top:752px;width:2px;height:8px;background:#fff;"></div>

</div>
</body>
</html>
